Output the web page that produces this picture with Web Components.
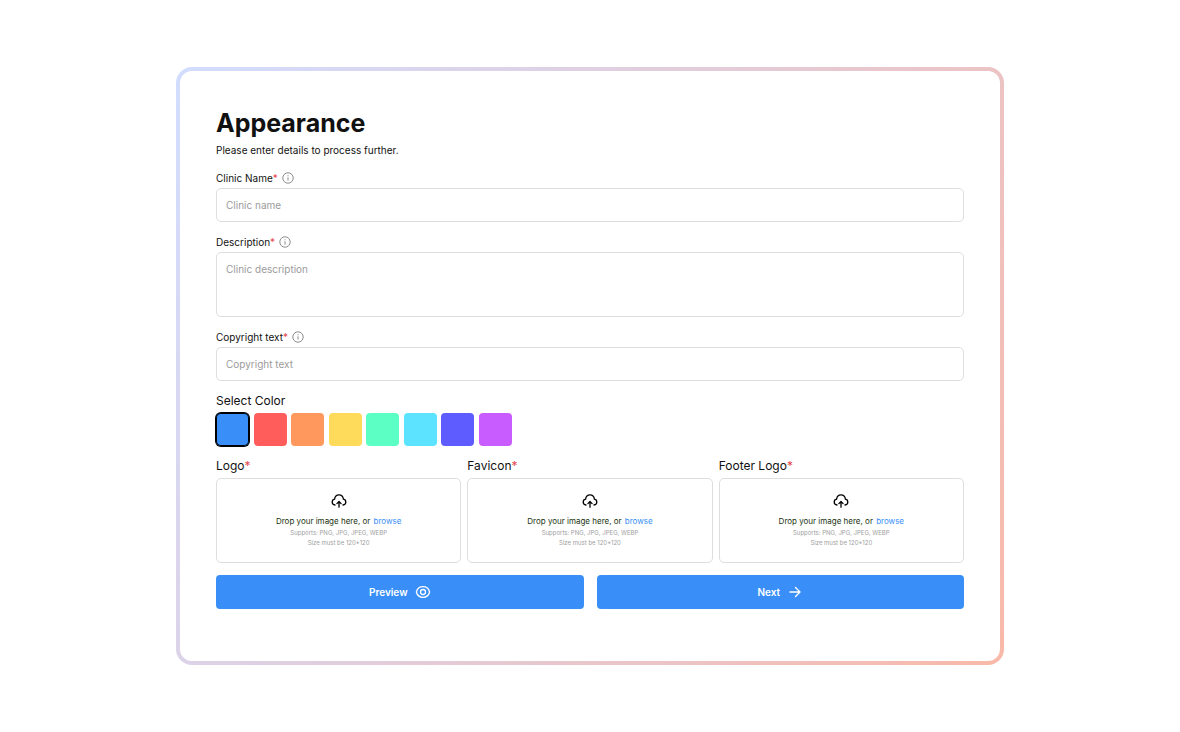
<!DOCTYPE html>
<html lang="en">
  <head>
    <meta charset="UTF-8" />
    <meta name="viewport" content="width=device-width, initial-scale=1.0" />
    <title>Appearance</title>
    <style>
      body {
        margin: 0;
        background: #fff;
        color: #111;
        font-family: Inter, "Liberation Sans", sans-serif;
        --primary: #398ff7;
        --line: #dedede;
        --muted: #9b9b9b;
        --required: #e5484d;
      }
    </style>
  </head>
  <body>
    <template id="page-tmpl">
      <style>
        :host {
          display: flex;
          align-items: center;
          justify-content: center;
          min-height: 100vh;
        }
        form {
          box-sizing: border-box;
          width: 100%;
          max-width: 828px;
          display: flex;
          flex-direction: column;
          gap: 12px;
          padding: 36px 36px 52px;
          border: 4px solid transparent;
          border-radius: 16px;
          background:
            linear-gradient(#fff, #fff) padding-box,
            linear-gradient(118deg, #d2ddff, #ebc4c6 70%, #f9b9a8) border-box;
        }
        h1 {
          margin: 0 0 3px;
          font-size: 25px;
          line-height: 32px;
          font-weight: 700;
        }
        p {
          margin: 0;
          font-size: 10px;
          line-height: 16px;
        }
        .uploads {
          display: grid;
          grid-template-columns: repeat(3, 1fr);
          gap: 6px;
        }
        .actions {
          display: grid;
          grid-template-columns: 1fr 1fr;
          gap: 13px;
        }
      </style>
      <form>
        <header>
          <h1>Appearance</h1>
          <p>Please enter details to process further.</p>
        </header>
        <text-field placeholder="Clinic name">Clinic Name</text-field>
        <text-field placeholder="Clinic description" multiline>Description</text-field>
        <text-field placeholder="Copyright text">Copyright text</text-field>
        <color-picker></color-picker>
        <div class="uploads">
          <upload-box>Logo</upload-box>
          <upload-box>Favicon</upload-box>
          <upload-box>Footer Logo</upload-box>
        </div>
        <div class="actions">
          <action-button>
            Preview
            <svg slot="icon" width="16" height="16" viewBox="0 0 16 16" fill="none" stroke="currentColor" stroke-width="1.3">
              <path d="M1.4 8C2.2 4.7 4.8 2.7 8 2.7S13.8 4.7 14.6 8C13.8 11.3 11.2 13.3 8 13.3S2.2 11.3 1.4 8Z" />
              <circle cx="8" cy="8" r="2.5" />
            </svg>
          </action-button>
          <action-button>
            Next
            <svg slot="icon" width="16" height="16" viewBox="0 0 16 16" fill="none" stroke="currentColor" stroke-width="1.4" stroke-linecap="round" stroke-linejoin="round">
              <path d="M3 8H13M8.5 3.5L13 8L8.5 12.5" />
            </svg>
          </action-button>
        </div>
      </form>
    </template>

    <template id="field-tmpl">
      <style>
        :host {
          display: flex;
          flex-direction: column;
          gap: 2px;
        }
        .head {
          display: flex;
          align-items: center;
          gap: 4px;
          height: 16px;
        }
        label {
          font-size: 10px;
          line-height: 16px;
        }
        label span {
          color: var(--required);
        }
        svg {
          color: #8c8c8c;
        }
        input,
        textarea {
          display: block;
          box-sizing: border-box;
          width: 100%;
          height: 34px;
          margin: 0;
          padding: 8px 9px;
          border: 1px solid var(--line);
          border-radius: 5px;
          outline: none;
          background: #fff;
          color: inherit;
          font: 10px/16px Inter, "Liberation Sans", sans-serif;
          resize: none;
        }
        textarea {
          height: 65px;
        }
        ::placeholder {
          color: var(--muted);
          opacity: 1;
        }
        input:focus,
        textarea:focus {
          border-color: var(--primary);
        }
      </style>
      <div class="head">
        <label for="control"><slot></slot><span>*</span></label>
        <svg width="12" height="12" viewBox="0 0 12 12" fill="none" stroke="currentColor">
          <circle cx="6" cy="6" r="5.2" />
          <path d="M6 5.3V8.6M6 3.3V4.3" />
        </svg>
      </div>
    </template>

    <template id="picker-tmpl">
      <style>
        :host {
          display: block;
        }
        fieldset {
          min-width: 0;
          margin: 0;
          padding: 0;
          border: 0;
        }
        legend {
          padding: 0;
          margin-bottom: 4px;
          font-size: 12px;
          line-height: 16px;
        }
        .swatches {
          display: flex;
          justify-content: space-between;
          max-width: 296px;
        }
        input {
          appearance: none;
          width: 33px;
          height: 33px;
          margin: 0;
          border-radius: 4px;
          background: var(--swatch);
          cursor: pointer;
        }
        input:checked {
          box-shadow: 0 0 0 1px #000, inset 0 0 0 1px #000;
          border-radius: 5px;
        }
      </style>
      <fieldset>
        <legend>Select Color</legend>
        <div class="swatches"></div>
      </fieldset>
    </template>

    <template id="upload-tmpl">
      <style>
        :host {
          display: flex;
          flex-direction: column;
          gap: 4px;
          min-width: 0;
        }
        .name {
          font-size: 12px;
          line-height: 16px;
        }
        .name span {
          color: var(--required);
        }
        .drop {
          box-sizing: border-box;
          height: 85px;
          display: flex;
          flex-direction: column;
          align-items: center;
          padding-top: 14px;
          border: 1px solid var(--line);
          border-radius: 5px;
          text-align: center;
          cursor: pointer;
        }
        svg {
          color: #000;
          margin-bottom: 5px;
        }
        .main {
          color: #20340f;
          font-size: 8px;
          line-height: 14px;
        }
        .main b {
          margin-left: 1px;
          color: var(--primary);
          font-weight: 400;
        }
        small {
          color: #a0a0a0;
          font-size: 6px;
          line-height: 10px;
        }
        input {
          display: none;
        }
      </style>
      <label class="name" for="file"><slot></slot><span>*</span></label>
      <label class="drop" for="file">
        <svg width="16" height="16" viewBox="0 0 16 16" fill="none" stroke="currentColor" stroke-width="1.3" stroke-linecap="round" stroke-linejoin="round">
          <path d="M4 12C2.3 11.8 1.2 10.6 1.2 9C1.2 7.5 2.2 6.3 3.6 6.1C3.9 3.6 5.7 1.9 8 1.9S12.1 3.6 12.4 6.1C13.8 6.3 14.8 7.5 14.8 9C14.8 10.6 13.7 11.8 12 12" />
          <path d="M8 14.2V8.8M5.9 10.6L8 8.5L10.1 10.6" />
        </svg>
        <span class="main">Drop your image here, or <b>browse</b></span>
        <small>Supports: PNG, JPG, JPEG, WEBP</small>
        <small>Size must be 120*120</small>
      </label>
      <input id="file" type="file" accept=".png,.jpg,.jpeg,.webp" />
    </template>

    <template id="button-tmpl">
      <style>
        :host {
          display: block;
        }
        button {
          width: 100%;
          height: 34px;
          display: flex;
          align-items: center;
          justify-content: center;
          gap: 7px;
          padding: 0;
          border: 0;
          border-radius: 4px;
          background: var(--primary);
          color: #fff;
          font: 600 10px/16px Inter, "Liberation Sans", sans-serif;
          cursor: pointer;
        }
      </style>
      <button type="button"><span><slot></slot></span><slot name="icon"></slot></button>
    </template>

    <appearance-page></appearance-page>

    <script>
      function render(host, id) {
        const root = host.attachShadow({ mode: "open" });
        root.append(document.getElementById(id).content.cloneNode(true));
        return root;
      }

      customElements.define("text-field", class extends HTMLElement {
          connectedCallback() {
            const root = render(this, "field-tmpl");
            const control = document.createElement(
              this.hasAttribute("multiline") ? "textarea" : "input"
            );
            control.id = "control";
            control.placeholder = this.getAttribute("placeholder");
            root.append(control);
          }
        }
      );

      const colors = {
        Blue: "#398ff7",
        Red: "#ff5c5c",
        Orange: "#ff985c",
        Yellow: "#ffdb5c",
        Green: "#5cffc4",
        Cyan: "#5ce3ff",
        Indigo: "#5f5cff",
        Purple: "#c95cff",
      };

      customElements.define("color-picker", class extends HTMLElement {
          connectedCallback() {
            const swatches = render(this, "picker-tmpl").querySelector(".swatches");
            Object.entries(colors).forEach(([name, value], i) => {
              const radio = document.createElement("input");
              radio.type = "radio";
              radio.name = "color";
              radio.value = value;
              radio.checked = i === 0;
              radio.setAttribute("aria-label", name);
              radio.style.setProperty("--swatch", value);
              swatches.append(radio);
            });
          }
        }
      );

      customElements.define("upload-box", class extends HTMLElement {
          connectedCallback() {
            render(this, "upload-tmpl");
          }
        }
      );

      customElements.define("action-button", class extends HTMLElement {
          connectedCallback() {
            render(this, "button-tmpl");
          }
        }
      );

      customElements.define("appearance-page", class extends HTMLElement {
          connectedCallback() {
            render(this, "page-tmpl");
          }
        }
      );
    </script>
  </body>
</html>
